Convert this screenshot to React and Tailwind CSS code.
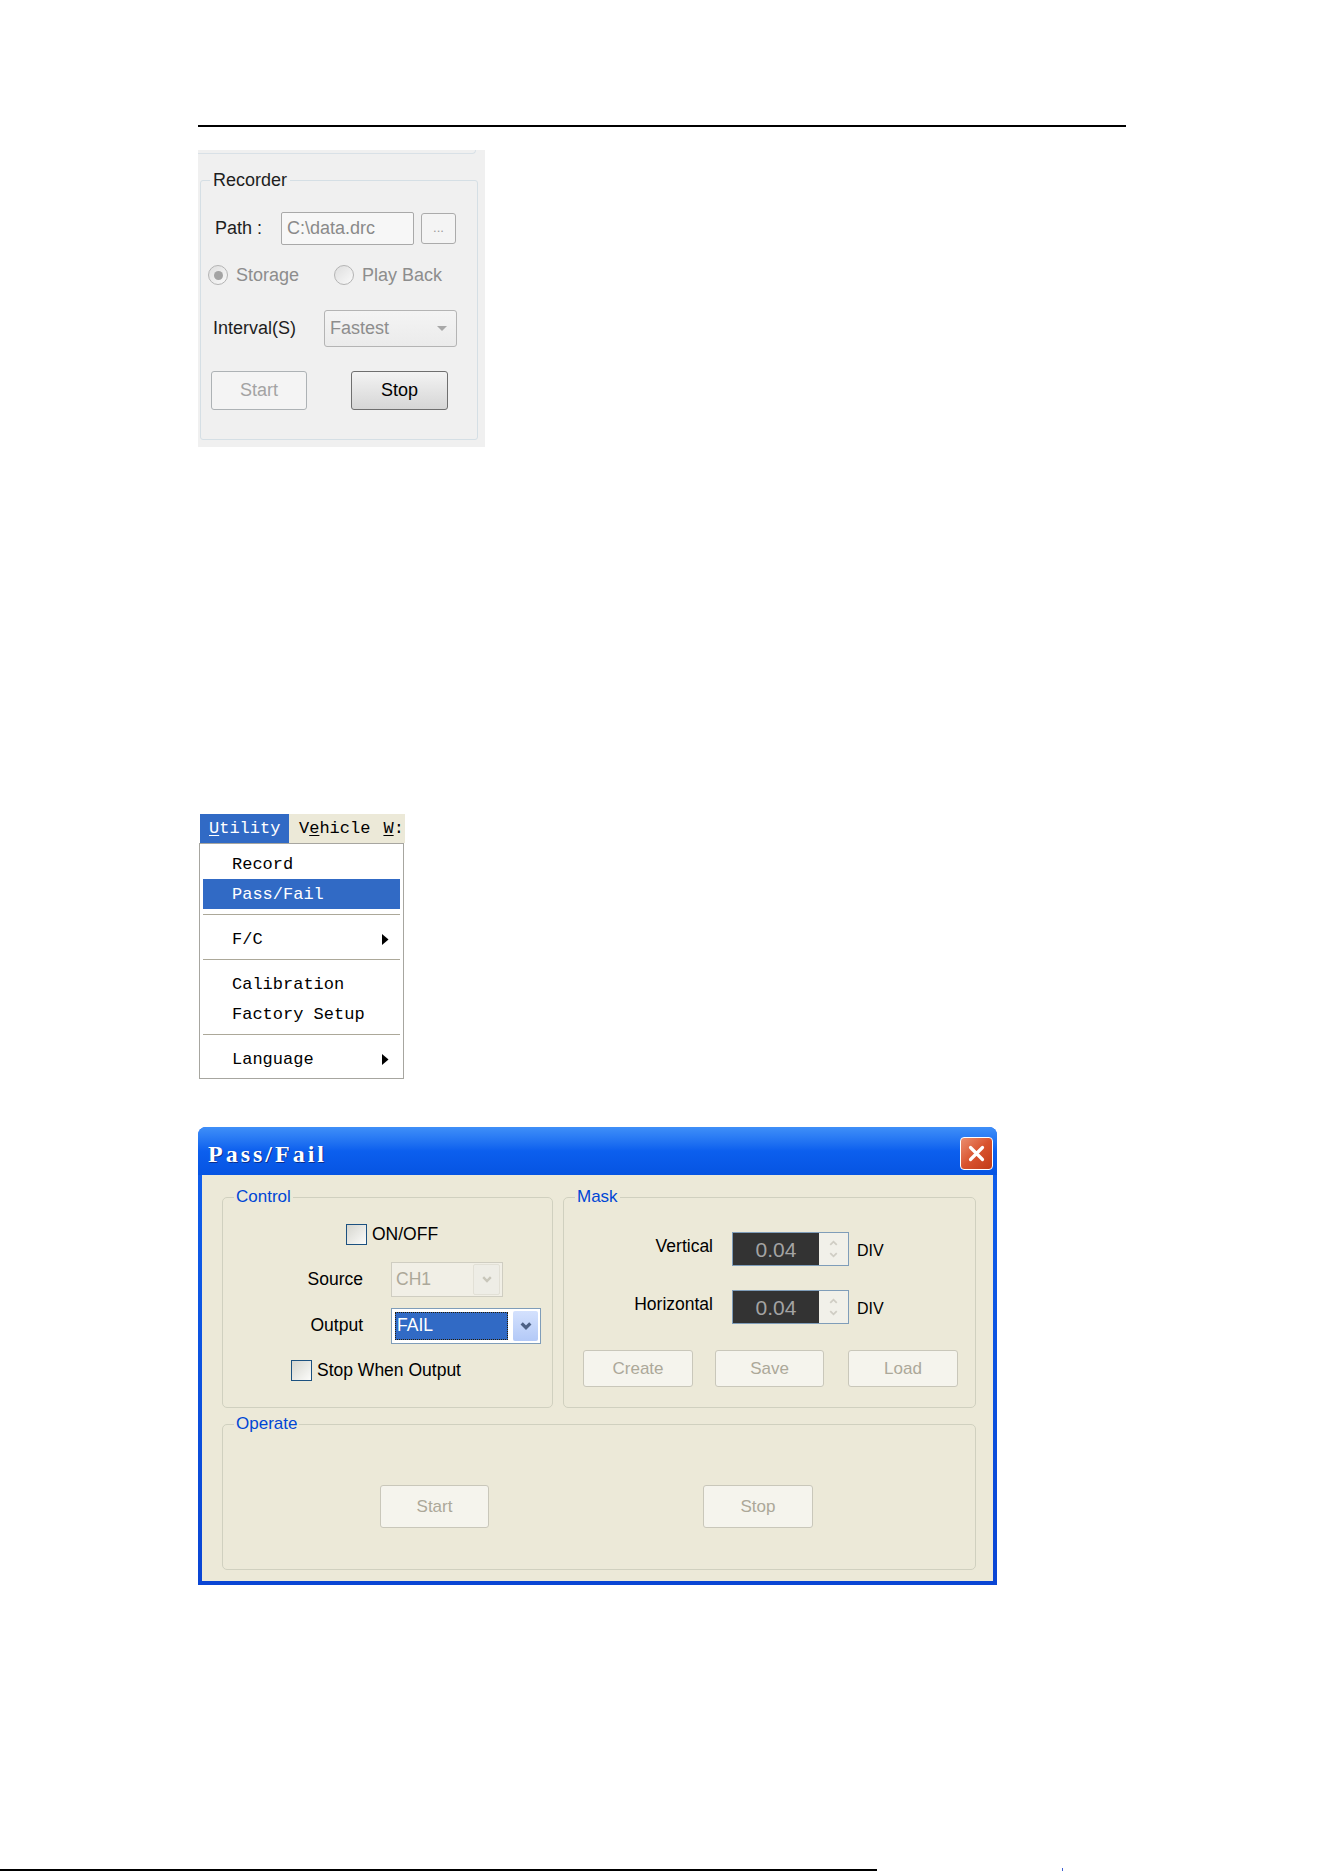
import React from "react";

// small drawn parts shared by the panels
function DownTriangle() {
  return <span className="h-0 w-0 border-x-[5px] border-t-[5px] border-x-transparent border-t-[#a8a8a8]" />;
}

function Chevron({ color, width = 10, stroke = 2.4 }) {
  return (
    <svg width={width} height={Math.round(width * 0.7)} viewBox="0 0 10 7">
      <path d="M1.2 1.2 L5 5 L8.8 1.2" fill="none" stroke={color} strokeWidth={stroke} />
    </svg>
  );
}

function Radio({ checked }) {
  return (
    <span className="flex h-[20px] w-[20px] items-center justify-center rounded-full border border-[#b4b4b4] bg-linear-to-br from-[#dedede] to-[#fafafa]">
      {checked && <span className="h-[9px] w-[9px] rounded-full bg-[#a3a3a3]" />}
    </span>
  );
}

function XpCheck() {
  return <span className="h-[21px] w-[21px] border border-[#1c5180] bg-linear-to-br from-[#d6d6cf] to-[#fcfcfa]" />;
}

function XpButton({ children, className }) {
  return (
    <div
      className={
        "flex items-center justify-center rounded-[3px] border border-[#c9c7ba] bg-[#f5f4ed] text-[17px] text-[#aca899] " +
        className
      }
    >
      {children}
    </div>
  );
}

function GroupBox({ label, className, children }) {
  return (
    <div className={"relative flex flex-col rounded-[5px] border border-[#d0d0bf] " + className}>
      <span className="absolute left-[11px] top-[-11px] bg-[#ece9d8] px-[2px] text-[17px] leading-[20px] text-[#0046d5]">
        {label}
      </span>
      {children}
    </div>
  );
}

function RecorderPanel() {
  return (
    <div className="mt-[23px] flex h-[297px] w-[287px] flex-col bg-[#f0f0f0] text-[18px] text-[#1e1e1e]">
      <div className="h-[4px] w-[278px] rounded-br-[4px] border-b border-r border-[#d9e1e7]" />
      <div className="relative ml-[2px] mt-[26px] flex h-[260px] w-[278px] flex-col rounded-[3px] border border-[#d5dfe5]">
        <span className="absolute left-[9px] top-[-11px] bg-[#f0f0f0] px-[3px] leading-[20px]">Recorder</span>

        <div className="mt-[31px] flex h-[33px] items-center">
          <span className="ml-[14px] w-[66px]">Path :</span>
          <div className="flex h-[33px] w-[133px] items-center rounded-[2px] border border-[#a9a9a9] bg-[#f7f7f7] pl-[5px] text-[#8a8a8a]">
            C:\data.drc
          </div>
          <div className="ml-[7px] flex h-[31px] w-[35px] items-end justify-center rounded-[3px] border border-[#ababab] bg-[#f4f4f4] pb-[9px] text-[13px] leading-none text-[#9a9a9a]">
            ...
          </div>
        </div>

        <div className="mt-[20px] flex h-[20px] items-center text-[#8d8d8d]">
          <div className="ml-[7px] flex w-[126px] items-center">
            <Radio checked />
            <span className="ml-[8px]">Storage</span>
          </div>
          <Radio />
          <span className="ml-[8px]">Play Back</span>
        </div>

        <div className="mt-[25px] flex h-[37px] items-center">
          <span className="ml-[12px] w-[111px]">Interval(S)</span>
          <div className="flex h-[37px] w-[133px] items-center rounded-[3px] border border-[#b4b4b4] bg-linear-to-b from-[#f4f4f4] to-[#ebebeb] pl-[5px] pr-[9px] text-[#8d8d8d]">
            <span>Fastest</span>
            <span className="ml-auto flex">
              <DownTriangle />
            </span>
          </div>
        </div>

        <div className="mt-[24px] flex h-[39px]">
          <div className="ml-[10px] flex w-[96px] items-center justify-center rounded-[3px] border border-[#adb2b5] bg-[#f4f4f4] text-[#a3a3a3]">
            Start
          </div>
          <div className="ml-[44px] flex w-[97px] items-center justify-center rounded-[3px] border border-[#6f6f6f] bg-linear-to-b from-[#f3f3f3] to-[#d6d6d6] text-black">
            Stop
          </div>
        </div>
      </div>
    </div>
  );
}

function SubArrow() {
  return (
    <svg width="7" height="11" viewBox="0 0 7 11" className="ml-auto">
      <polygon points="0,0 6.5,5.5 0,11" fill="#000" />
    </svg>
  );
}

function MenuItem({ children, active, arrow }) {
  return (
    <div
      className={
        "mx-[3px] flex h-[30px] items-center pl-[29px] pr-[11px] " +
        (active ? "bg-[#316ac5] text-white" : "text-black")
      }
    >
      <span>{children}</span>
      {arrow && <SubArrow />}
    </div>
  );
}

function MenuSep() {
  return <div className="mx-[3px] mb-[8px] mt-[5px] h-[2px] border-b border-t border-b-white border-t-[#aca899]" />;
}

function UtilityMenu() {
  return (
    <div className="mt-[367px] flex flex-col font-['Liberation_Mono',monospace] text-[17px] leading-none">
      <div className="ml-[2px] flex h-[29px] w-[205px] items-center whitespace-nowrap bg-[#ece9d8]">
        <span className="flex h-full w-[89px] shrink-0 items-center bg-[#316ac5] pl-[9px] text-white">
          <u className="underline-offset-2">U</u>tility
        </span>
        <span className="shrink-0 pl-[10px]">
          V<u className="underline-offset-2">e</u>hicle
        </span>
        <span className="shrink-0 pl-[13px]">
          <u className="underline-offset-2">W</u>:
        </span>
      </div>
      <div className="ml-[1px] flex w-[205px] flex-col border border-[#a7a6a0] bg-white pb-[4px] pt-[5px]">
        <MenuItem>Record</MenuItem>
        <MenuItem active>Pass/Fail</MenuItem>
        <MenuSep />
        <MenuItem arrow>F/C</MenuItem>
        <MenuSep />
        <MenuItem>Calibration</MenuItem>
        <MenuItem>Factory Setup</MenuItem>
        <MenuSep />
        <MenuItem arrow>Language</MenuItem>
      </div>
    </div>
  );
}

function SpinBox() {
  return (
    <div className="ml-[19px] flex h-[34px] w-[117px] border border-[#7f9db9]">
      <div className="flex w-[86px] items-center justify-center bg-[#333333] text-[21px] text-[#a3a3a3]">0.04</div>
      <div className="flex flex-1 flex-col items-center justify-center gap-[6px] bg-[#f1f0e9]">
        <span className="flex rotate-180">
          <Chevron color="#cfcdc4" width={9} stroke={2} />
        </span>
        <Chevron color="#cfcdc4" width={9} stroke={2} />
      </div>
    </div>
  );
}

function PassFailDialog() {
  return (
    <div className="mt-[48px] flex h-[458px] w-[799px] flex-col overflow-hidden rounded-t-[8px] bg-linear-to-b from-[#1060ee] to-[#0a45d4] text-[17.5px] leading-none text-black">
      <div className="flex h-[48px] items-center bg-linear-to-b from-[#3f8ff8] via-[#0c5fee] to-[#0654e2] pt-[5px]">
        <span className="pl-[10px] font-['Liberation_Serif',serif] text-[24px] font-bold tracking-[3px] text-white [text-shadow:1px_1px_0_#0b2f8c]">
          Pass/Fail
        </span>
        <div className="ml-auto mr-[4px] flex h-[33px] w-[33px] items-center justify-center rounded-[4px] border border-white bg-linear-to-br from-[#ea8d6e] via-[#d9532e] to-[#c13b17]">
          <svg width="17" height="17" viewBox="0 0 17 17">
            <path d="M2.5 2.5 L14.5 14.5 M14.5 2.5 L2.5 14.5" stroke="#fff" strokeWidth="3.2" strokeLinecap="round" />
          </svg>
        </div>
      </div>

      <div className="mx-[4px] mb-[4px] flex flex-1 flex-col bg-[#ece9d8] pl-[20px] pr-[17px] pt-[22px]">
        <div className="flex gap-[10px]">
          <GroupBox label="Control" className="h-[211px] w-[331px]">
            <div className="ml-[123px] mt-[26px] flex h-[21px] items-center">
              <XpCheck />
              <span className="ml-[5px]">ON/OFF</span>
            </div>
            <div className="mt-[17px] flex h-[35px] items-center">
              <span className="w-[140px] text-right">Source</span>
              <div className="ml-[28px] flex h-[35px] w-[112px] items-center border border-[#cfcdc1] bg-[#f1efe6] pl-[4px] pr-[2px] text-[#aca899]">
                <span>CH1</span>
                <span className="ml-auto flex h-[31px] w-[27px] items-center justify-center rounded-[2px] border border-[#e2e0d6] bg-[#eeede6]">
                  <Chevron color="#c8c6ba" />
                </span>
              </div>
            </div>
            <div className="mt-[11px] flex h-[36px] items-center">
              <span className="w-[140px] text-right">Output</span>
              <div className="ml-[28px] flex h-[36px] w-[150px] items-center border border-[#7f9db9] bg-white pl-[3px] pr-[2px]">
                <span className="flex h-[28px] w-[113px] items-center border border-dotted border-[#2a1d05] bg-[#316ac5] pl-[1px] text-white">
                  FAIL
                </span>
                <span className="ml-auto flex h-[30px] w-[25px] items-center justify-center rounded-[2px] bg-linear-to-b from-[#d4e1fd] to-[#b3c9f7]">
                  <Chevron color="#4d6185" width={12} stroke={2.8} />
                </span>
              </div>
            </div>
            <div className="ml-[68px] mt-[16px] flex h-[21px] items-center">
              <XpCheck />
              <span className="ml-[5px]">Stop When Output</span>
            </div>
          </GroupBox>

          <GroupBox label="Mask" className="h-[211px] w-[413px]">
            <div className="mt-[34px] flex h-[34px] items-center">
              <span className="w-[149px] pb-[5px] text-right">Vertical</span>
              <SpinBox />
              <span className="ml-[8px] pt-[3px] text-[16px]">DIV</span>
            </div>
            <div className="mt-[24px] flex h-[34px] items-center">
              <span className="w-[149px] pb-[5px] text-right">Horizontal</span>
              <SpinBox />
              <span className="ml-[8px] pt-[3px] text-[16px]">DIV</span>
            </div>
            <div className="ml-[19px] mt-[26px] flex">
              <XpButton className="h-[37px] w-[110px]">Create</XpButton>
              <XpButton className="ml-[22px] h-[37px] w-[109px]">Save</XpButton>
              <XpButton className="ml-[24px] h-[37px] w-[110px]">Load</XpButton>
            </div>
          </GroupBox>
        </div>

        <GroupBox label="Operate" className="mt-[16px] h-[146px] w-[754px]">
          <div className="ml-[157px] mt-[60px] flex">
            <XpButton className="h-[43px] w-[109px]">Start</XpButton>
            <XpButton className="ml-[214px] h-[43px] w-[110px]">Stop</XpButton>
          </div>
        </GroupBox>
      </div>
    </div>
  );
}

export default function App() {
  return (
    <div className="flex h-[1872px] w-[1324px] flex-col bg-white font-['Liberation_Sans',Arial,sans-serif] text-black">
      <div className="flex flex-col items-start pl-[198px]">
        <div className="mt-[125px] h-[2px] w-[928px] bg-black" />
        <RecorderPanel />
        <UtilityMenu />
        <PassFailDialog />
      </div>
      <div className="mb-[1px] mt-auto flex items-end">
        <div className="h-[2px] w-[877px] bg-black" />
        <div className="ml-[185px] h-[3px] w-[1px] bg-[#3f5fd0]" />
      </div>
    </div>
  );
}
